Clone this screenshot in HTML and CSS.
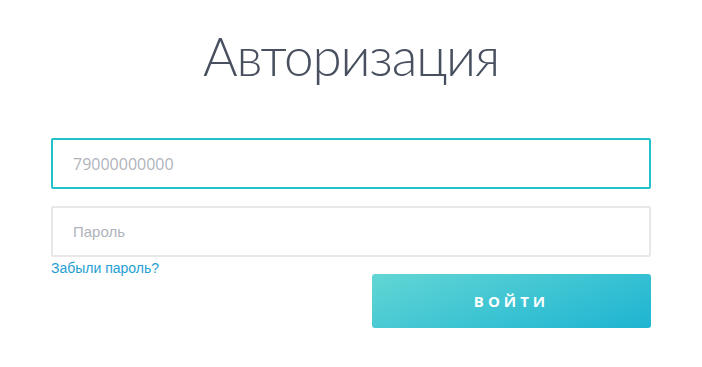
FILE: index.html
```html
<!DOCTYPE html>
<html lang="ru">
<head>
    <meta charset="UTF-8">
    <meta name="viewport" content="width=device-width, initial-scale=1.0">
    <title>Авторизация</title>
    <link rel="stylesheet" href="styles.css">
</head>
<body>
    <div class="auth">
        <h1 class="auth-title">Авторизация</h1>
        <form class="auth-form">
            <input class="field field-phone field-active" type="text" placeholder="79000000000" autofocus>
            <input class="field" type="password" placeholder="Пароль">
            <div class="auth-bottom">
                <a class="forgot" href="#">Забыли пароль?</a>
                <button class="btn-login" type="button">ВОЙТИ</button>
            </div>
        </form>
    </div>
</body>
</html>
```

FILE: styles.css
```css
*{
    padding: 0;
    margin: 0;
    box-sizing: border-box;
    font-family: "Open Sans", Arial, sans-serif;
}
body{
    background: #fff;
}
.auth{
    display: flex;
    flex-direction: column;
    align-items: center;
    padding-top: 18px;
}
.auth-title{
    font-family: Lato, "Open Sans", sans-serif;
    font-weight: 300;
    font-size: 53px;
    line-height: 76px;
    letter-spacing: -1.2px;
    color: #48505f;
}
.auth-form{
    display: flex;
    flex-direction: column;
    width: 600px;
    margin-top: 44px;
}
.field{
    height: 51px;
    border: 2px solid #e8e8e8;
    border-radius: 2px;
    padding: 0 20px;
    font-size: 15px;
    font-family: Arial, "Liberation Sans", sans-serif;
    color: #444;
    outline: none;
    margin-bottom: 17px;
}
.field::placeholder{
    color: #b0b3bb;
}
.field-phone{
    font-family: "Open Sans", Arial, sans-serif;
    font-size: 16px;
}
.field-active{
    border-color: #21c3c9;
}
.auth-bottom{
    display: flex;
    justify-content: space-between;
    align-items: flex-start;
    margin-top: -15px;
}
.forgot{
    font-family: Arial, "Liberation Sans", sans-serif;
    font-size: 14px;
    color: #1f9ed3;
    text-decoration: none;
    line-height: 18px;
}
.btn-login{
    width: 279px;
    height: 54px;
    margin-top: 15px;
    border: none;
    border-radius: 3px;
    background: linear-gradient(160deg, #62d6d4 0%, #1db4d2 100%);
    color: #fff;
    font-weight: 700;
    font-size: 15px;
    letter-spacing: 4px;
    cursor: pointer;
}
```
